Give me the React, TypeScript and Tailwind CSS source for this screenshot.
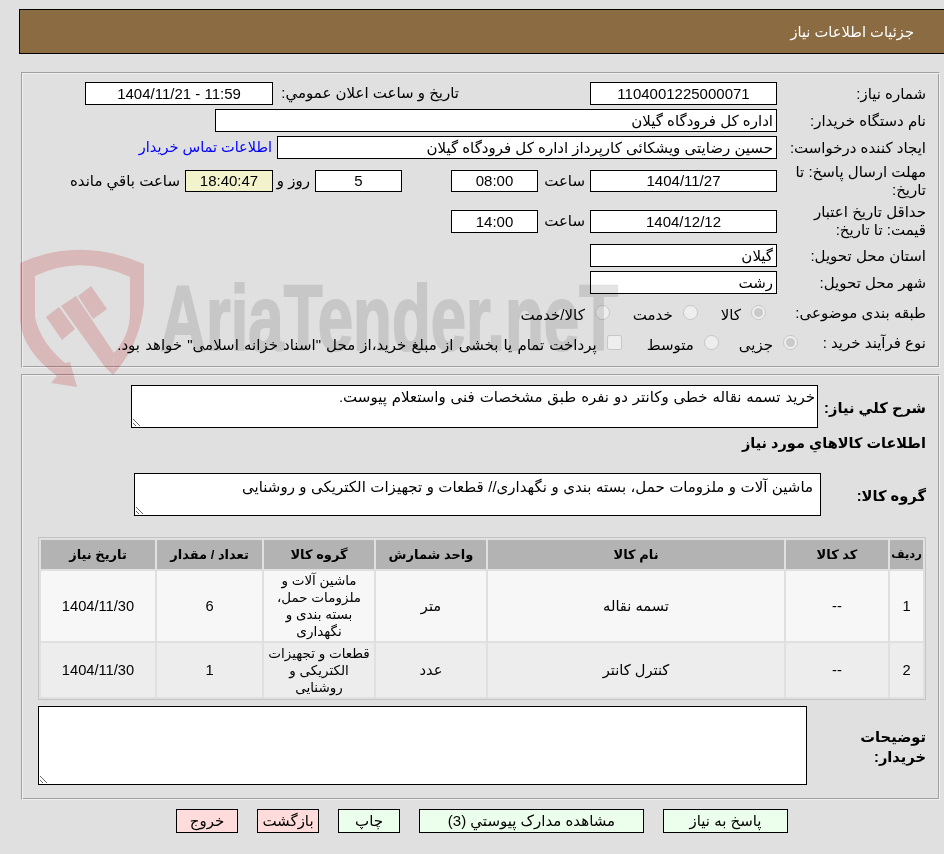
import React from 'react';

const font = { fontFamily: '"Liberation Sans", "DejaVu Sans", sans-serif' };

function Field({ value, className = '' }: { value: string; className?: string }) {
  return (
    <input
      readOnly
      value={value}
      className={`h-[23px] shrink-0 border border-black bg-white px-[3px] text-[15px] text-black outline-none ${className}`}
    />
  );
}

function Row({ label, children, className = '', labelWidth = 'w-[149px]' }: { label: React.ReactNode; children?: React.ReactNode; className?: string; labelWidth?: string }) {
  return (
    <div className={`flex items-center ${className}`}>
      <div className={`${labelWidth} shrink-0 whitespace-nowrap leading-[18px]`}>{label}</div>
      {children}
    </div>
  );
}

function Radio({ checked, label, className = '' }: { checked?: boolean; label: string; className?: string }) {
  return (
    <span className={`flex items-center whitespace-nowrap ${className}`}>
      <input type="radio" disabled checked={!!checked} readOnly className="m-0 mb-[5px] h-[15px] w-[15px]" />
      <span className="mr-[10px]">{label}</span>
    </span>
  );
}

// multiply blend so the mark tints the inputs but leaves the black text crisp
function Watermark() {
  return (
    <svg dir="ltr" className="pointer-events-none absolute left-0 top-0 z-10 mix-blend-multiply" width="944" height="854" viewBox="0 0 944 854">
      {/* shield outline with the arrow at the bottom */}
      <path
        d="M20 263 Q80 236 144 264 L144 304 Q140 345 113 375 L114 353 Q130 335 130 313 L130 277 Q80 254 35 276 L35 317 Q40 342 65 363 L70 362 L77 387 L51 383 L57 376 Q22 350 20 320 Z"
        fill="#f6d2d2"
      />
      {/* gavel */}
      <path d="M46 317 L59 307 L75 329 L62 340 Z" fill="#f6d2d2" />
      <path d="M78 296 L91 286 L107 309 L93 319 Z" fill="#f6d2d2" />
      <path d="M61 306 L76 296 L114 353 L113 375 L105 367 Z" fill="#f6d2d2" />
      <text
        x="160"
        y="350"
        direction="ltr"
        fontFamily="Liberation Sans, sans-serif"
        fontWeight="700"
        fontSize="93"
        fill="#e3e3e3"
        stroke="#e3e3e3"
        strokeWidth="2"
        textLength="458"
        lengthAdjust="spacingAndGlyphs"
      >
        AriaTender.neT
      </text>
    </svg>
  );
}

const panelClass =
  'relative ml-[21px] mr-[4px] border border-b-[#f0f0f0] border-l-[#a0a0a0] border-r-[#f0f0f0] border-t-[#a0a0a0] pr-[13px] shadow-[inset_1px_1px_0_#f0f0f0,inset_-1px_-1px_0_#a0a0a0]';
const thClass = 'bg-[#b3b3b3] p-0 text-center text-[13px] font-bold h-[29px]';
const tdClass = 'px-[2px] text-center text-[14.67px] leading-[17px]';
const groupTd = 'px-0 text-center text-[13.5px] leading-[17px] whitespace-nowrap';

export default function App() {
  return (
    <div dir="rtl" style={font} className="relative h-[854px] w-[944px] overflow-hidden bg-[#e0e0e0] text-[15px] text-black">
      <div className="pt-[9px]">
        <div className="ml-[19px] flex h-[45px] items-center border border-r-0 border-black bg-[#8b6b42] pr-[30px] text-[14.67px] text-white">
          جزئیات اطلاعات نیاز
        </div>
      </div>

      <Watermark />

      <section className={`${panelClass} mt-[18px] h-[296px] pt-[9px]`}>
        <Row label="شماره نیاز:">
          <Field value="1104001225000071" className="w-[187px] text-center" />
          <div className="w-[131px] shrink-0" />
          <div className="w-[186px] shrink-0 whitespace-nowrap">تاریخ و ساعت اعلان عمومي:</div>
          <Field value="11:59 - 1404/11/21" className="w-[188px] text-center" />
        </Row>
        <Row label="نام دستگاه خریدار:" className="mt-[4px]">
          <Field value="اداره کل فرودگاه گیلان" className="w-[562px]" />
        </Row>
        <Row label="ایجاد کننده درخواست:" className="mt-[4px]">
          <Field value="حسین رضایتی ویشکائی کارپرداز اداره کل فرودگاه گیلان" className="w-[500px]" />
          <a className="mr-[5px] whitespace-nowrap text-[14.5px] text-[#0000ff]">اطلاعات تماس خریدار</a>
        </Row>
        <Row label={<span>مهلت ارسال پاسخ: تا<br />تاریخ:</span>} className="mt-[4px]">
          <Field value="1404/11/27" className="w-[187px] !h-[22px] text-center" />
          <span className="mr-[5px] w-[47px] shrink-0">ساعت</span>
          <Field value="08:00" className="w-[87px] !h-[22px] text-center" />
          <span className="w-[49px] shrink-0"></span>
          <Field value="5" className="w-[87px] !h-[22px] text-center" />
          <span className="mr-[5px] w-[37px] shrink-0 whitespace-nowrap">روز و</span>
          <Field value="18:40:47" className="w-[88px] !h-[22px] !bg-[#f2f2cc] text-center" />
          <span className="mr-[5px] whitespace-nowrap">ساعت باقي مانده</span>
        </Row>
        <Row label={<span>حداقل تاریخ اعتبار<br />قیمت: تا تاریخ:</span>} className="mt-[4px]">
          <Field value="1404/12/12" className="w-[187px] text-center" />
          <span className="mr-[5px] w-[47px] shrink-0">ساعت</span>
          <Field value="14:00" className="w-[87px] text-center" />
        </Row>
        <Row label="استان محل تحویل:" className="mt-[5px]">
          <Field value="گیلان" className="w-[187px]" />
        </Row>
        <Row label="شهر محل تحویل:" className="mt-[4px]">
          <Field value="رشت" className="w-[187px]" />
        </Row>
        <Row label="طبقه بندی موضوعی:" labelWidth="w-[149px] pb-[4px]" className="mt-[11px] h-[20px]">
          <div className="flex items-center">
            <Radio checked label="کالا" className="mr-[11px]" />
            <Radio label="خدمت" className="mr-[23px]" />
            <Radio label="کالا/خدمت" className="mr-[23px]" />
          </div>
        </Row>
        <Row label="نوع فرآیند خرید :" labelWidth="w-[128px] pb-[4px]" className="mt-[10px] h-[20px]">
          <div className="flex items-center">
            <Radio checked label="جزیی" />
            <Radio label="متوسط" className="mr-[20px]" />
            <span className="mr-[25px] flex items-center whitespace-nowrap">
              <input type="checkbox" disabled className="m-0 mb-[5px] h-[15px] w-[15px]" />
              <span className="mr-[10px] [word-spacing:1px]">پرداخت تمام یا بخشی از مبلغ خرید،از محل "اسناد خزانه اسلامی" خواهد بود.</span>
            </span>
          </div>
        </Row>
      </section>

      <section className={`${panelClass} mt-[6px] h-[426px] pt-[10px]`}>
        <div className="flex">
          <div className="w-[108px] shrink-0 pt-[12px] text-[14.67px] font-bold">شرح كلي نیاز:</div>
          <textarea
            readOnly
            value="خرید تسمه نقاله خطی وکانتر دو نفره طبق مشخصات فنی واستعلام پیوست."
            className="h-[43px] w-[687px] border border-black bg-white px-[2px] text-[15px] outline-none [word-spacing:0.7px]"
          />
        </div>
        <div className="h-[30px] text-[14.5px] font-bold leading-[30px]">اطلاعات كالاهاي مورد نياز</div>
        <div className="mt-[15px] flex">
          <div className="w-[105px] shrink-0 pt-[12px] text-[14.67px] font-bold">گروه کالا:</div>
          <textarea
            readOnly
            value="ماشین آلات و ملزومات حمل، بسته بندی و نگهداری// قطعات و تجهیزات الکتریکی و روشنایی"
            className="h-[43px] w-[687px] border border-black bg-white px-[7px] pt-[2px] text-[15px] outline-none [word-spacing:0.3px]"
          />
        </div>

        <div className="mt-[21px] w-[888px] border border-[#c4c4c4]">
          <table className="w-full table-fixed border-separate border-spacing-[2px]">
            <colgroup>
              <col className="w-[33px]" />
              <col className="w-[102px]" />
              <col className="w-[296px]" />
              <col className="w-[110px]" />
              <col className="w-[110px]" />
              <col className="w-[105px]" />
              <col className="w-[114px]" />
            </colgroup>
            <thead>
              <tr>
                <th className="h-[29px] bg-[#b3b3b3] p-0 text-center text-[11.5px] font-bold">ردیف</th>
                <th className={thClass}>کد کالا</th>
                <th className={thClass}>نام کالا</th>
                <th className={thClass}>واحد شمارش</th>
                <th className={thClass}>گروه کالا</th>
                <th className={thClass}>تعداد / مقدار</th>
                <th className={thClass}>تاریخ نیاز</th>
              </tr>
            </thead>
            <tbody>
              <tr className="h-[70px] bg-[#f7f7f7]">
                <td className={tdClass}>1</td>
                <td className={tdClass}>--</td>
                <td className={tdClass}>تسمه نقاله</td>
                <td className={tdClass}>متر</td>
                <td className={groupTd}>ماشین آلات و<br />ملزومات حمل،<br />بسته بندی و<br />نگهداری</td>
                <td className={tdClass}>6</td>
                <td className={tdClass}>1404/11/30</td>
              </tr>
              <tr className="h-[54px] bg-[#ededed]">
                <td className={tdClass}>2</td>
                <td className={tdClass}>--</td>
                <td className={tdClass}>کنترل کانتر</td>
                <td className={tdClass}>عدد</td>
                <td className={groupTd}>قطعات و تجهیزات<br />الکتریکی و<br />روشنایی</td>
                <td className={tdClass}>1</td>
                <td className={tdClass}>1404/11/30</td>
              </tr>
            </tbody>
          </table>
        </div>

        <div className="mt-[6px] flex">
          <div className="w-[119px] shrink-0 pt-[21px] text-[14.67px] font-bold leading-[20px]">توضیحات<br />خریدار:</div>
          <textarea readOnly value="" className="h-[79px] w-[769px] border border-black bg-white text-[15px] outline-none" />
        </div>
      </section>

      <div className="mr-[156px] mt-[9px] flex gap-[19px]">
        <button className="h-[24px] w-[125px] border border-black bg-[#ecffec]">پاسخ به نیاز</button>
        <button className="h-[24px] w-[225px] border border-black bg-[#ecffec]">مشاهده مدارک پیوستي (3)</button>
        <button className="h-[24px] w-[62px] border border-black bg-[#ecffec]">چاپ</button>
        <button className="h-[24px] w-[62px] border border-black bg-[#ffdcdc]">بازگشت</button>
        <button className="h-[24px] w-[62px] border border-black bg-[#ffdcdc]">خروج</button>
      </div>
    </div>
  );
}
